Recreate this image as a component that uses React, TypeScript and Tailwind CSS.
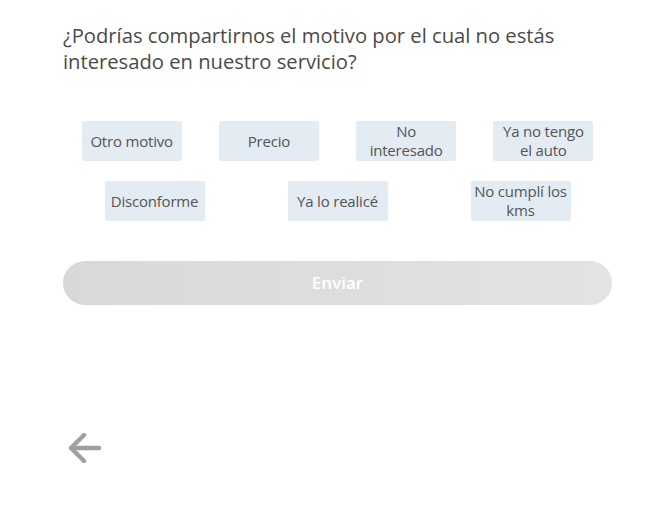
const rowOne = [["Otro motivo"], ["Precio"], ["No", "interesado"], ["Ya no tengo", "el auto"]];
const rowTwo = [["Disconforme"], ["Ya lo realicé"], ["No cumplí los", "kms"]];

function Chip({ lines }: { lines: string[] }) {
  return (
    <button className="w-[100px] h-[40px] rounded-[2px] bg-[#e3ebf3] text-[#555555] text-[15px] leading-[19px] tracking-[-0.2px] flex flex-col items-center justify-center text-center whitespace-nowrap">
      {lines.map((l) => (
        <span key={l}>{l}</span>
      ))}
    </button>
  );
}

export default function App() {
  return (
    <div className="w-[656px] h-[517px] bg-white font-['Open_Sans',sans-serif] flex flex-col">
      <div className="px-[63px] pt-[22px] w-[656px]">
        <h1 className="text-[20.2px] leading-[26px] text-[#4a4a4a] w-[540px]">
          ¿Podrías compartirnos el motivo por el cual no estás interesado en nuestro servicio?
        </h1>

        <div className="mt-[47px] flex flex-col gap-[20px] w-[549px]">
          <div className="flex justify-around">
            {rowOne.map((r) => (
              <Chip key={r[0]} lines={r} />
            ))}
          </div>
          <div className="flex justify-around">
            {rowTwo.map((r) => (
              <Chip key={r[0]} lines={r} />
            ))}
          </div>
        </div>

        <button className="mt-[40px] w-[549px] h-[44px] rounded-full bg-gradient-to-r from-[#d8d8d8] to-[#e3e3e3] text-white text-[17px] font-semibold">
          Enviar
        </button>

        <div className="mt-[128px] ml-[5px]">
          <svg width="33" height="30" viewBox="0 0 33 30" fill="none" stroke="#a0a0a0" strokeWidth="4.5" strokeLinecap="round" strokeLinejoin="round">
            <path d="M3 15H31" />
            <path d="M16 2 3 15l13 13" />
          </svg>
        </div>
      </div>
    </div>
  );
}
